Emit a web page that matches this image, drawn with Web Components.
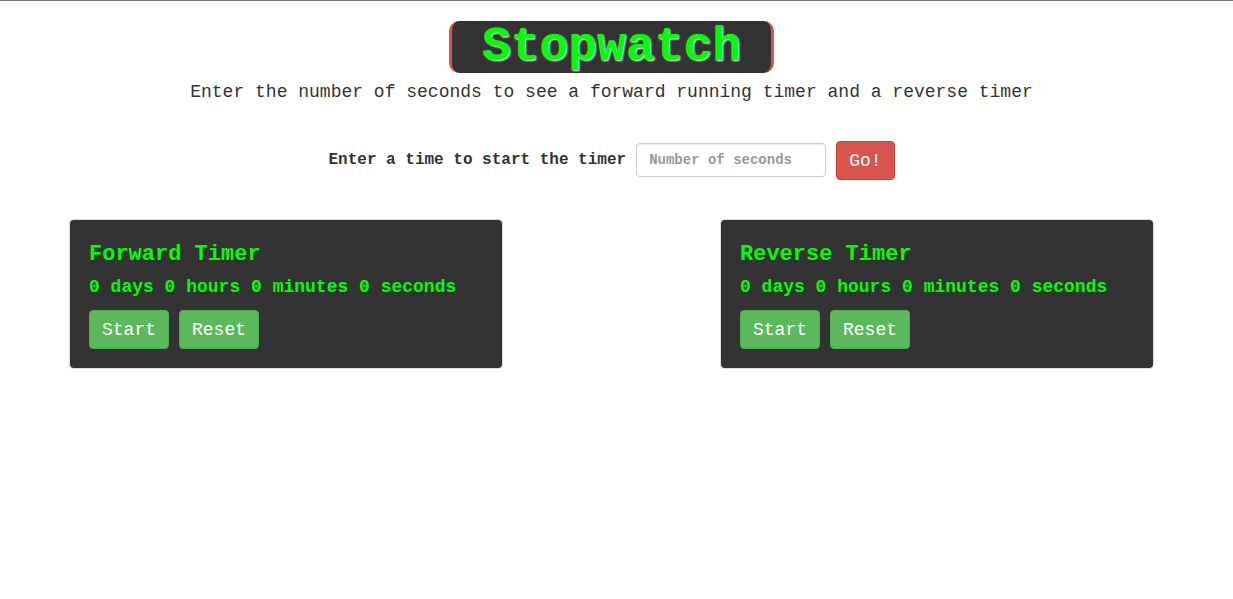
<!DOCTYPE html>
<html lang="en">
<head>
<meta charset="utf-8">
<title>Stopwatch</title>
<style>
body { margin: 0; background: #fff; color: #333; font-family: "Liberation Mono", "Courier New", monospace; }
</style>
</head>
<body>
<stopwatch-app></stopwatch-app>
<script>
class BaseElement extends HTMLElement {
  constructor() {
    super();
    this.attachShadow({ mode: "open" }).innerHTML = this.template();
  }
}

customElements.define("app-button", class extends BaseElement {
  template() {
    return `<style>
      :host { display: inline-block; --fill: #5cb85c; --edge: #4cae4c; }
      :host([variant="danger"]) { --fill: #d9534f; --edge: #d43f3a; }
      button { display: block; box-sizing: border-box; height: 39px; margin: 0; padding: 0 12px;
        font: 18px/36px "Liberation Mono", "Courier New", monospace; color: #fff; background: var(--fill);
        border: 1px solid var(--edge); border-radius: 4px; cursor: pointer; }
    </style><button type="button"><slot></slot></button>`;
  }
});

customElements.define("page-header", class extends BaseElement {
  template() {
    return `<style>
      :host { display: flex; flex-direction: column; align-items: center; text-align: center; }
      h1 { margin: 0; padding: 0 30px; font-size: 48px; line-height: 52px; font-weight: 700; color: #0f0;
        background: #333; border: solid #d9534f; border-width: 0 3px; border-radius: 10px;
        text-shadow: 1px 1px 2px #fff; }
      p { margin: 6px 0 0; font-size: 18px; line-height: 26px; }
    </style><h1><slot name="title"></slot></h1><p><slot></slot></p>`;
  }
});

customElements.define("time-form", class extends BaseElement {
  template() {
    return `<style>
      :host { display: block; }
      form { display: flex; flex-wrap: wrap; justify-content: center; align-items: center; gap: 10px; }
      .field { display: flex; align-items: center; gap: 10px; padding-bottom: 1px; }
      label { font-size: 16px; line-height: 22px; font-weight: 700; }
      input { box-sizing: border-box; width: 190px; height: 34px; margin: 0; padding: 6px 12px;
        font: 700 14px/20px "Liberation Mono", "Courier New", monospace; color: #555; background: #fff;
        border: 1px solid #ccc; border-radius: 4px; box-shadow: inset 0 1px 1px rgba(0,0,0,.075); }
      input::placeholder { color: #999; opacity: 1; }
    </style>
    <form><div class="field"><label for="seconds">Enter a time to start the timer</label>
      <input id="seconds" type="text" placeholder="Number of seconds"></div>
      <app-button variant="danger">Go!</app-button></form>`;
  }
});

customElements.define("timer-card", class extends BaseElement {
  template() {
    return `<style>
      :host { display: block; box-sizing: border-box; padding: 19px; color: #0f0; background: #333;
        background-clip: padding-box; border: 1px solid #ddd; border-radius: 4px; }
      h2 { margin: 0; font-size: 22px; line-height: 32px; font-weight: 700; }
      p { margin: 4px 0 11px; font-size: 18px; line-height: 24px; font-weight: 700; }
      div { display: flex; gap: 10px; }
    </style>
    <h2><slot></slot></h2>
    <p>0 days 0 hours 0 minutes 0 seconds</p>
    <div><app-button>Start</app-button><app-button>Reset</app-button></div>`;
  }
});

customElements.define("stopwatch-app", class extends BaseElement {
  template() {
    return `<style>
      :host { display: block; border-top: 1px solid #777; padding: 20px 10px 20px 0; }
      time-form { margin-top: 36px; }
      main { display: flex; flex-wrap: wrap; justify-content: space-between; gap: 20px;
        max-width: 1085px; margin: 39px auto 0; }
      timer-card { flex: 0 0 40%; min-width: 408px; }
    </style>
    <page-header><span slot="title">Stopwatch</span>Enter the number of seconds to see a forward running timer and a reverse timer</page-header>
    <time-form></time-form>
    <main><timer-card>Forward Timer</timer-card><timer-card>Reverse Timer</timer-card></main>`;
  }
});
</script>
</body>
</html>
